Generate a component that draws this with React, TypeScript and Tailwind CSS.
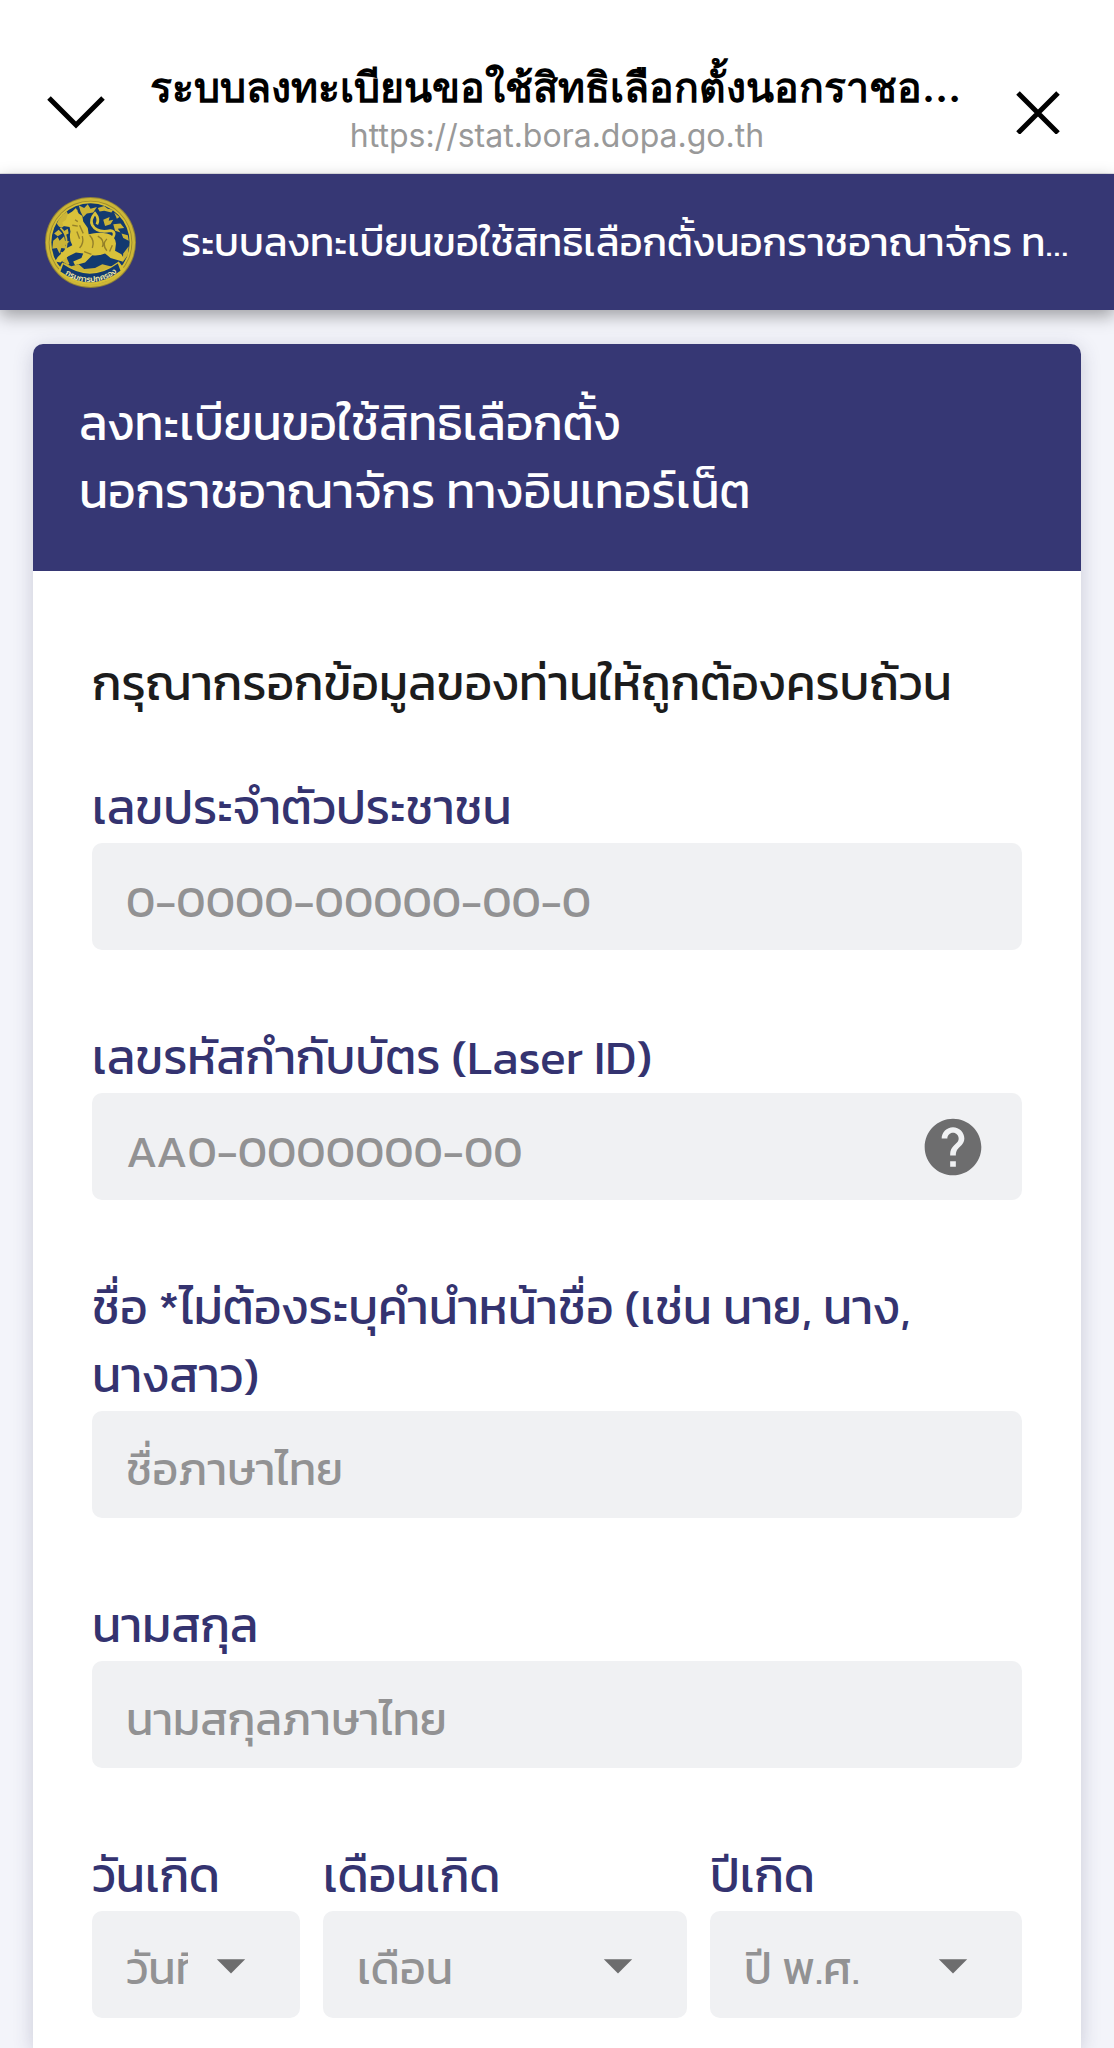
import { MdArrowDropDown, MdHelp } from "react-icons/md";

const textFields = [
  { id: "citizenId", label: "เลขประจำตัวประชาชน", placeholder: "0-0000-00000-00-0", help: false },
  { id: "laserId", label: "เลขรหัสกำกับบัตร (Laser ID)", placeholder: "AA0-0000000-00", help: true },
  {
    id: "firstName",
    label: "ชื่อ *ไม่ต้องระบุคำนำหน้าชื่อ (เช่น นาย, นาง, นางสาว)",
    placeholder: "ชื่อภาษาไทย",
    help: false,
  },
  { id: "lastName", label: "นามสกุล", placeholder: "นามสกุลภาษาไทย", help: false },
];

const birthFields = [
  { id: "birthDay", label: "วันเกิด", placeholder: "วันที่" },
  { id: "birthMonth", label: "เดือนเกิด", placeholder: "เดือน" },
  { id: "birthYear", label: "ปีเกิด", placeholder: "ปี พ.ศ." },
];

export default function App() {
  return (
    <div className="flex min-h-screen flex-col bg-[#f3f4fa] font-['Kanit','Noto_Sans_Thai',sans-serif]">
      <BrowserBar />
      <AppBar />
      <main className="flex flex-1 flex-col px-[33px] pt-[34px]">
        <section className="flex flex-1 flex-col rounded-t-[10px] bg-white shadow-[0_4px_20px_rgba(50,50,93,0.22)]">
          <h2 className="rounded-t-[10px] bg-[#363774] px-[46px] pt-[45px] pb-[46px] text-[48px] leading-[68px] text-white">
            ลงทะเบียนขอใช้สิทธิเลือกตั้ง
            <br />
            นอกราชอาณาจักร ทางอินเทอร์เน็ต
          </h2>
          <RegisterForm />
        </section>
      </main>
    </div>
  );
}

function BrowserBar() {
  return (
    <header className="flex items-center justify-between border-b border-[#e2e2e6] bg-white px-[46px] pt-[55px] pb-5">
      <button type="button" aria-label="ย่อหน้าต่าง" className="shrink-0">
        <svg viewBox="0 0 60 60" className="size-[60px]" fill="none" stroke="#000" strokeWidth="5">
          <path d="M3 24 L30 51 L57 24" />
        </svg>
      </button>
      <div className="flex min-w-0 flex-1 flex-col items-center px-11 font-['Inter',sans-serif]">
        <p className="w-full truncate text-center text-[41px] leading-[64px] font-semibold text-black">
          ระบบลงทะเบียนขอใช้สิทธิเลือกตั้งนอกราชอาณาจักร ทางอินเทอร์เน็ต
        </p>
        <p className="text-[32px] leading-[34px] text-[#999]">https://stat.bora.dopa.go.th</p>
      </div>
      <button type="button" aria-label="ปิด" className="shrink-0">
        <svg viewBox="0 0 60 60" className="size-[60px]" fill="none" stroke="#000" strokeWidth="5">
          <path d="M10 19 L50 59 M50 19 L10 59" />
        </svg>
      </button>
    </header>
  );
}

function AppBar() {
  return (
    <div className="z-10 flex h-[136px] items-center gap-[45px] bg-[#363774] px-[45px] shadow-[0_6px_16px_rgba(0,0,0,0.35)]">
      <Emblem />
      <h1 className="min-w-0 flex-1 truncate text-[40px] leading-[68px] text-white">
        ระบบลงทะเบียนขอใช้สิทธิเลือกตั้งนอกราชอาณาจักร ทางอินเทอร์เน็ต
      </h1>
    </div>
  );
}

function RegisterForm() {
  return (
    <form className="flex flex-col px-[59px] pt-[78px]">
      <p className="mb-[56px] text-[48px] leading-[68px] text-[#1c1c1c]">
        กรุณากรอกข้อมูลของท่านให้ถูกต้องครบถ้วน
      </p>
      <div className="flex flex-col gap-[73px]">
        {textFields.map((field) => (
          <div key={field.id} className="flex flex-col gap-[2px]">
            <label htmlFor={field.id} className="text-[48px] leading-[68px] text-[#343370]">
              {field.label}
            </label>
            <div className="flex items-center rounded-[10px] bg-[#f0f1f3] pr-[35px]">
              <input
                id={field.id}
                type="text"
                placeholder={field.placeholder}
                className="h-[107px] min-w-0 flex-1 bg-transparent pt-2 pl-[34px] text-[45px] outline-none placeholder:text-[#929293]"
              />
              {field.help && (
                <button type="button" aria-label="วิธีดูเลข Laser ID">
                  <MdHelp className="size-[68px] text-[#6d6d6e]" />
                </button>
              )}
            </div>
          </div>
        ))}
        <div className="grid grid-cols-[4fr_7fr_6fr] gap-[23px]">
          {birthFields.map((field) => (
            <div key={field.id} className="flex min-w-0 flex-col gap-[2px]">
              <label htmlFor={field.id} className="text-[48px] leading-[68px] text-[#343370]">
                {field.label}
              </label>
              <div className="relative">
                <select
                  id={field.id}
                  className="h-[107px] w-full appearance-none rounded-[10px] bg-[#f0f1f3] pt-2 pr-28 pl-[34px] text-[45px] text-[#929293] outline-none"
                >
                  <option>{field.placeholder}</option>
                </select>
                <MdArrowDropDown className="pointer-events-none absolute inset-y-0 right-[35px] my-auto size-[68px] text-[#6d6d6e]" />
              </div>
            </div>
          ))}
        </div>
      </div>
    </form>
  );
}

function Emblem() {
  return (
    <svg viewBox="0 0 100 100" className="size-[91px] shrink-0" role="img" aria-label="กรมการปกครอง">
      <circle cx="50" cy="50" r="50" fill="#8f8138" />
      <circle cx="50" cy="50" r="49" fill="#cdb637" />
      <circle cx="50" cy="50" r="46" fill="#9c8a2e" />
      <circle cx="50" cy="50" r="45" fill="#d6bf35" />
      <circle cx="50" cy="50" r="43" fill="#123a70" />

      {/* foliage on the left and along the top */}
      <g fill="#cbb437">
        <path d="M13 29 q4 -9 11 -13 l2 5 q5 -7 10 -7 l-3 7 q-4 5 -10 6 l-3 6 q-4 2 -7 -4z" />
        <path d="M37 9 l6 3 l4 -4 l3 5 l7 -2 l-4 6 l-7 1 l-4 4 l-3 -6z" />
        <path d="M58 12 l7 -2 l4 3 l6 1 l-2 3 l-8 -2 l-5 1z" />
        <path d="M64 25 l7 -3 l-1 4 l5 -1 l-3 5 l-6 2z M75 30 l8 -1 l4 5 l-7 1 l3 4 l-6 -2z" />
        <path d="M76 17 l6 5 l-3 2z M84 40 l7 2 l1 6 l-6 -3z" />
        <path d="M9 48 l5 -4 l2 4 l5 -5 l1 5 l5 1 l-5 4 l2 4 l-6 -1 l-2 6 l-3 -6 l-5 1z" />
        <path d="M10 40 l5 -4 l4 4 l-5 3z M20 38 l5 -3 l1 5 l-4 2z" />
        <path d="M17 60 l5 2 l4 -4 l2 5 l-5 4 l3 8 l-7 -4z" />
        <path d="M86 62 l6 -8 l-1 10 l-6 8z" />
      </g>
      <path d="M17 34 q9 8 6 22 q-2 10 3 18" fill="none" stroke="#cbb437" strokeWidth="2" />

      {/* lion with its tail curled over the back */}
      <path
        d="M72 48 q8 -10 0 -11 q-15 3 -20 -6 q-3 -6 3 -13 q5 6 2 12"
        fill="none"
        stroke="#d9c23a"
        strokeWidth="3"
      />
      <path
        d="M34 12 l3 6 l4 3 l1 6 l5 7 l1 7 q10 -3 20 -1 q9 2 10 11 l-1 8 l7 4 l3 5 l-2 3 l-13 -4 l-6 -5 q-7 3 -14 2 l-8 8 l-11 3 l-2 -4 l9 -4 l2 -5 l-8 -1 l-10 5 l-7 6 l-6 -1 l3 -5 l10 -10 l6 -3 q-4 -6 -2 -15 l-1 -5 l-7 -1 l-1 -4 l4 -3 l2 -6 l5 -3z"
        fill="#d9c23a"
      />
      <path
        d="M33 25 l3 2 M30 31 l6 1 M38 31 l4 9 M35 38 l3 8 M41 43 q2 8 -3 13 M49 42 q6 6 3 14 M58 43 q8 4 5 12 M68 46 q-6 6 0 13 M43 60 l8 3 M74 53 l-3 7"
        fill="none"
        stroke="#94802a"
        strokeWidth="1.5"
      />
      <path d="M20 72 l9 4 l8 -2 l6 5 l12 -1 l8 -4 l12 3 l6 -4 l-6 7 q-27 10 -48 1z" fill="#cbb437" />

      {/* name ribbon */}
      <path d="M19 72 Q50 94 81 71 L88 80 Q50 112 14 82z" fill="#d6bf35" />
      <path d="M20 74 Q50 95 80 73 L83 81 Q50 106 17 82z" fill="#123a70" />
      <path id="ribbon" d="M19 83 Q50 105 82 81" fill="none" />
      <text fill="#f2e9a8" fontSize="9" fontWeight="500">
        <textPath href="#ribbon" startOffset="50%" textAnchor="middle">
          กรมการปกครอง
        </textPath>
      </text>
    </svg>
  );
}
